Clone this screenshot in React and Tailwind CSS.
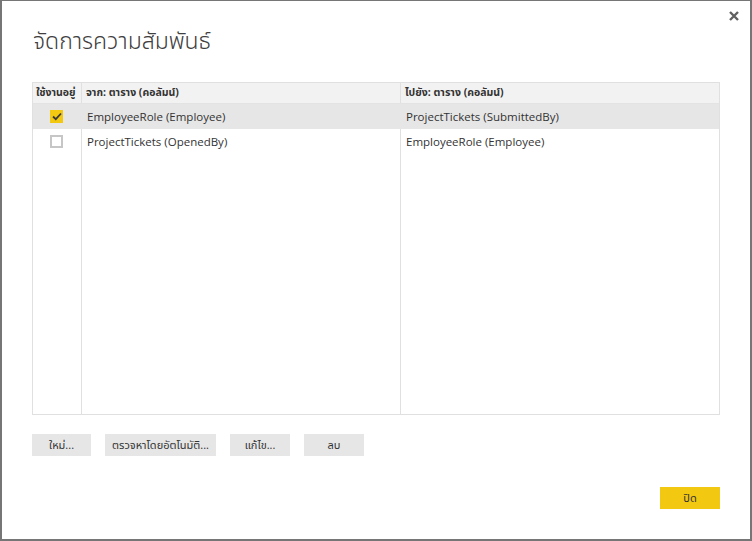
const rows = [
  { active: true, from: 'EmployeeRole (Employee)', to: 'ProjectTickets (SubmittedBy)' },
  { active: false, from: 'ProjectTickets (OpenedBy)', to: 'EmployeeRole (Employee)' },
]

const font = { fontFamily: '"Segoe UI", "Open Sans", "Noto Sans", "Noto Sans Thai", "DejaVu Sans", sans-serif' }

function Check({ on }) {
  if (on) {
    return (
      <div className="w-[13px] h-[13px] bg-[#f2c811] flex items-center justify-center">
        <svg width="10" height="9" viewBox="0 0 10 9">
          <path d="M1 4.5 L3.8 7.2 L9 1.5" fill="none" stroke="#3a3a3a" strokeWidth="1.8" />
        </svg>
      </div>
    )
  }
  return <div className="w-[13px] h-[13px] border-2 border-[#c6c6c6] bg-white" />
}

function Btn({ children, className = '' }) {
  return (
    <div className={`h-[22px] bg-[#e6e6e6] flex items-center justify-center text-[11px] text-[#333] ${className}`}>
      {children}
    </div>
  )
}

export default function App() {
  return (
    <div className="w-[752px] h-[541px] bg-white border-x-2 border-b-2 border-t border-[#767676] relative text-[#333]" style={font}>
      <div className="absolute right-[10px] top-[9px] w-[12px] h-[12px]">
        <svg width="12" height="12" viewBox="0 0 12 12">
          <path d="M2 2 L10 10 M10 2 L2 10" stroke="#606060" strokeWidth="2.4" />
        </svg>
      </div>

      <div className="pl-[31px] pt-[23px] text-[23px] font-light text-[#404040] leading-[32px]">จัดการความสัมพันธ์</div>

      <div className="ml-[30px] mt-[26px] w-[688px] h-[333px] border border-[#e0e0e0] flex flex-col text-[11.5px]">
        <div className="h-[21px] flex bg-[#f2f2f2] border-b border-[#e3e3e3] text-[10.5px] font-bold text-[#333]">
          <div className="w-[49px] border-r border-[#e0e0e0] flex items-center pl-[3px] whitespace-nowrap overflow-hidden">ใช้งานอยู่</div>
          <div className="w-[319px] border-r border-[#e0e0e0] flex items-center pl-[4px]">จาก: ตาราง (คอลัมน์)</div>
          <div className="flex-1 flex items-center pl-[4px]">ไปยัง: ตาราง (คอลัมน์)</div>
        </div>
        <div className="flex-1 flex flex-col relative">
          <div className="absolute inset-0 flex pointer-events-none">
            <div className="w-[49px] border-r border-[#e0e0e0]" />
            <div className="w-[319px] border-r border-[#e0e0e0]" />
          </div>
          {rows.map((r, i) => (
            <div key={i} className={`h-[25px] flex relative ${r.active ? 'bg-[#e6e6e6]' : ''}`}>
              <div className="w-[49px] flex items-center justify-center pr-[2px]">
                <Check on={r.active} />
              </div>
              <div className="w-[319px] flex items-center pl-[5px]">{r.from}</div>
              <div className="flex-1 flex items-center pl-[5px]">{r.to}</div>
            </div>
          ))}
        </div>
      </div>

      <div className="ml-[30px] mt-[19px] flex gap-[14px]">
        <Btn className="w-[59px]">ใหม่...</Btn>
        <Btn className="w-[111px]">ตรวจหาโดยอัตโนมัติ...</Btn>
        <Btn className="w-[60px]">แก้ไข...</Btn>
        <Btn className="w-[60px]">ลบ</Btn>
      </div>

      <div className="flex justify-end pr-[30px] mt-[31px]">
        <div className="w-[60px] h-[22px] bg-[#f2c811] flex items-center justify-center text-[11px] text-[#333]">ปิด</div>
      </div>
    </div>
  )
}
